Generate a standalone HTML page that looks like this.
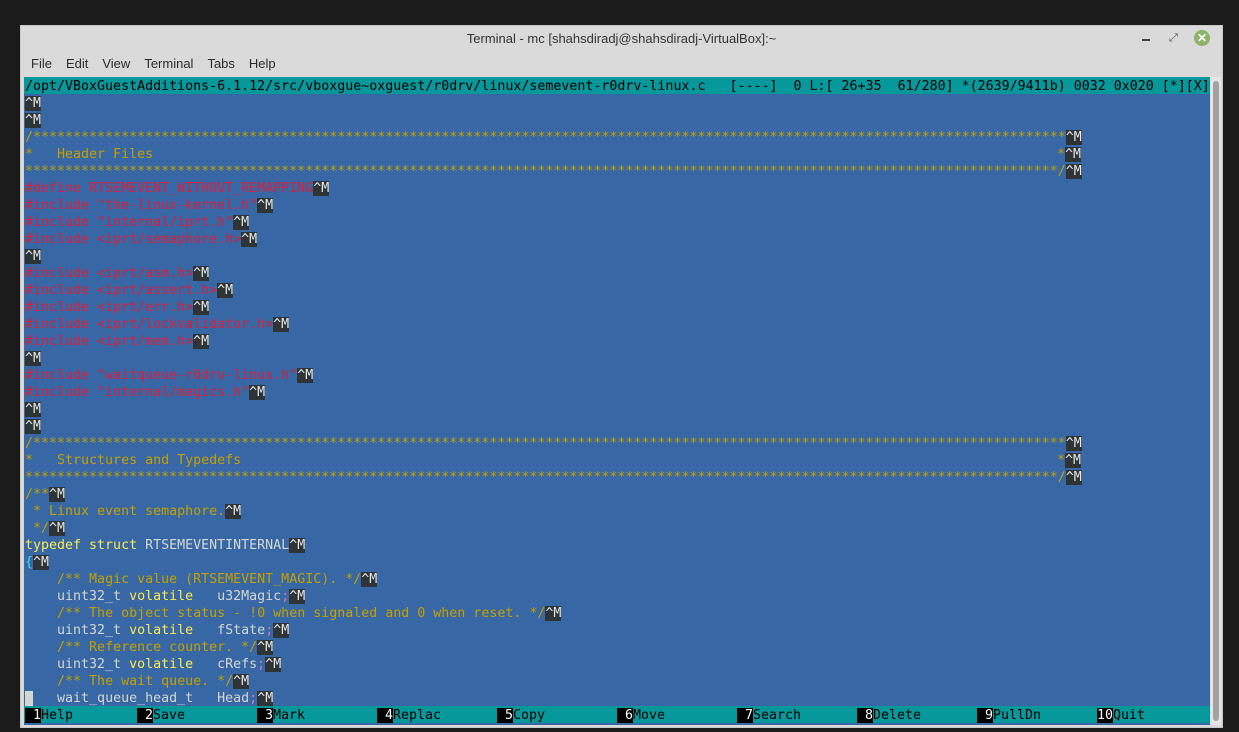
<!DOCTYPE html>
<html><head><meta charset="utf-8"><style>
*{margin:0;padding:0;box-sizing:border-box}
body{width:1239px;height:732px;background:#1b1b1b;overflow:hidden;position:relative;font-family:"Liberation Sans",sans-serif}
#win{position:absolute;left:20px;top:25px;width:1203px;height:703px;background:#dadada;border:1px solid #c8c8c8}
#title{position:absolute;left:0;top:5px;width:100%;text-align:center;font-size:13px;color:#333}
#menu{position:absolute;left:10px;top:30px;font-size:13px;color:#2a2a2a;word-spacing:0}
#menu span{margin-right:14px}
#term{position:absolute;left:3px;top:51px;width:1186px;height:648px;background:#3767a5;font-family:"DejaVu Sans Mono",monospace;font-size:13.3px;line-height:17px;color:#d3d7cf;overflow:hidden}
.l{position:absolute;left:1px;height:17px;white-space:pre;padding-top:1px}
.st{background:#06989a;color:#000;left:0;width:100%;top:0;padding-left:1px}
.m{background:#2e3436;color:#e8e8e8}
.c{color:#c4a000}.r{color:#d8203c}.k{color:#fce94f}.p{color:#c878c8}.cy{color:#34e2e2}
#fk{position:absolute;left:0;top:629px;width:100%;height:17px;background:#06989a;white-space:pre;color:#000;padding-top:1px}
#fk > span{position:absolute;top:1px}
.n{background:#000;color:#fff}
#sb{position:absolute;left:1190px;top:51px;width:10px;height:648px;background:#e6e6e6}
#th{position:absolute;left:2px;top:4px;width:6px;height:640px;background:#a2a2a2;border-radius:3px}
</style></head><body>
<div id="win">
<div id="title">Terminal - mc [shahsdiradj@shahsdiradj-VirtualBox]:~</div>
<div style="position:absolute;left:1121px;top:13px;width:8px;height:2px;background:#444"></div>
<div style="position:absolute;left:1148px;top:8px;width:9px;height:9px;font-size:11px;line-height:9px;color:#555;transform:rotate(0deg)">⤢</div>
<div style="position:absolute;left:1173px;top:4px;width:16px;height:16px;border-radius:8px;background:#8db36a;color:#fff;font-size:12px;font-weight:bold;text-align:center;line-height:16px">✕</div>
<div id="menu"><span>File</span><span>Edit</span><span>View</span><span>Terminal</span><span>Tabs</span><span>Help</span></div>
<div id="term">
<div class="l st">/opt/VBoxGuestAdditions-6.1.12/src/vboxgue~oxguest/r0drv/linux/semevent-r0drv-linux.c   [----]  0 L:[ 26+35  61/280] *(2639/9411b) 0032 0x020 [*][X]</div>
<div class="l" style="top:17px"><span class="m">^M</span></div>
<div class="l" style="top:34px"><span class="m">^M</span></div>
<div class="l" style="top:51px"><span class="c">/*********************************************************************************************************************************</span><span class="m">^M</span></div>
<div class="l" style="top:68px"><span class="c">*   Header Files</span><span style="position:absolute;left:1032px;top:1px"><span class="c">*</span><span class="m">^M</span></span></div>
<div class="l" style="top:85px"><span class="c">*********************************************************************************************************************************/</span><span class="m">^M</span></div>
<div class="l r" style="top:102px">#define RTSEMEVENT_WITHOUT_REMAPPING<span class="m">^M</span></div>
<div class="l r" style="top:119px">#include "the-linux-kernel.h"<span class="m">^M</span></div>
<div class="l r" style="top:136px">#include "internal/iprt.h"<span class="m">^M</span></div>
<div class="l r" style="top:153px">#include &lt;iprt/semaphore.h&gt;<span class="m">^M</span></div>
<div class="l" style="top:170px"><span class="m">^M</span></div>
<div class="l r" style="top:187px">#include &lt;iprt/asm.h&gt;<span class="m">^M</span></div>
<div class="l r" style="top:204px">#include &lt;iprt/assert.h&gt;<span class="m">^M</span></div>
<div class="l r" style="top:221px">#include &lt;iprt/err.h&gt;<span class="m">^M</span></div>
<div class="l r" style="top:238px">#include &lt;iprt/lockvalidator.h&gt;<span class="m">^M</span></div>
<div class="l r" style="top:255px">#include &lt;iprt/mem.h&gt;<span class="m">^M</span></div>
<div class="l" style="top:272px"><span class="m">^M</span></div>
<div class="l r" style="top:289px">#include "waitqueue-r0drv-linux.h"<span class="m">^M</span></div>
<div class="l r" style="top:306px">#include "internal/magics.h"<span class="m">^M</span></div>
<div class="l" style="top:323px"><span class="m">^M</span></div>
<div class="l" style="top:340px"><span class="m">^M</span></div>
<div class="l" style="top:357px"><span class="c">/*********************************************************************************************************************************</span><span class="m">^M</span></div>
<div class="l" style="top:374px"><span class="c">*   Structures and Typedefs</span><span style="position:absolute;left:1032px;top:1px"><span class="c">*</span><span class="m">^M</span></span></div>
<div class="l" style="top:391px"><span class="c">*********************************************************************************************************************************/</span><span class="m">^M</span></div>
<div class="l c" style="top:408px">/**<span class="m">^M</span></div>
<div class="l c" style="top:425px"> * Linux event semaphore.<span class="m">^M</span></div>
<div class="l c" style="top:442px"> */<span class="m">^M</span></div>
<div class="l" style="top:459px"><span class="k">typedef struct</span> RTSEMEVENTINTERNAL<span class="m">^M</span></div>
<div class="l" style="top:476px"><span class="cy">{</span><span class="m">^M</span></div>
<div class="l" style="top:493px">    <span class="c">/** Magic value (RTSEMEVENT_MAGIC). */</span><span class="m">^M</span></div>
<div class="l" style="top:510px">    uint32_t <span class="k">volatile</span>   u32Magic<span class="p">;</span><span class="m">^M</span></div>
<div class="l" style="top:527px">    <span class="c">/** The object status - !0 when signaled and 0 when reset. */</span><span class="m">^M</span></div>
<div class="l" style="top:544px">    uint32_t <span class="k">volatile</span>   fState<span class="p">;</span><span class="m">^M</span></div>
<div class="l" style="top:561px">    <span class="c">/** Reference counter. */</span><span class="m">^M</span></div>
<div class="l" style="top:578px">    uint32_t <span class="k">volatile</span>   cRefs<span class="p">;</span><span class="m">^M</span></div>
<div class="l" style="top:595px">    <span class="c">/** The wait queue. */</span><span class="m">^M</span></div>
<div class="l" style="top:612px"><span style="background:#d3d7cf"> </span>   wait_queue_head_t   Head<span class="p">;</span><span class="m">^M</span></div>
<div id="fk">
<span style="left:1px"><span class="n"> 1</span>Help</span>
<span style="left:113px"><span class="n"> 2</span>Save</span>
<span style="left:233px"><span class="n"> 3</span>Mark</span>
<span style="left:353px"><span class="n"> 4</span>Replac</span>
<span style="left:473px"><span class="n"> 5</span>Copy</span>
<span style="left:593px"><span class="n"> 6</span>Move</span>
<span style="left:713px"><span class="n"> 7</span>Search</span>
<span style="left:833px"><span class="n"> 8</span>Delete</span>
<span style="left:953px"><span class="n"> 9</span>PullDn</span>
<span style="left:1073px"><span class="n">10</span>Quit</span>
</div>
</div>
<div id="sb"><div id="th"></div></div>
</div>
</body></html>
